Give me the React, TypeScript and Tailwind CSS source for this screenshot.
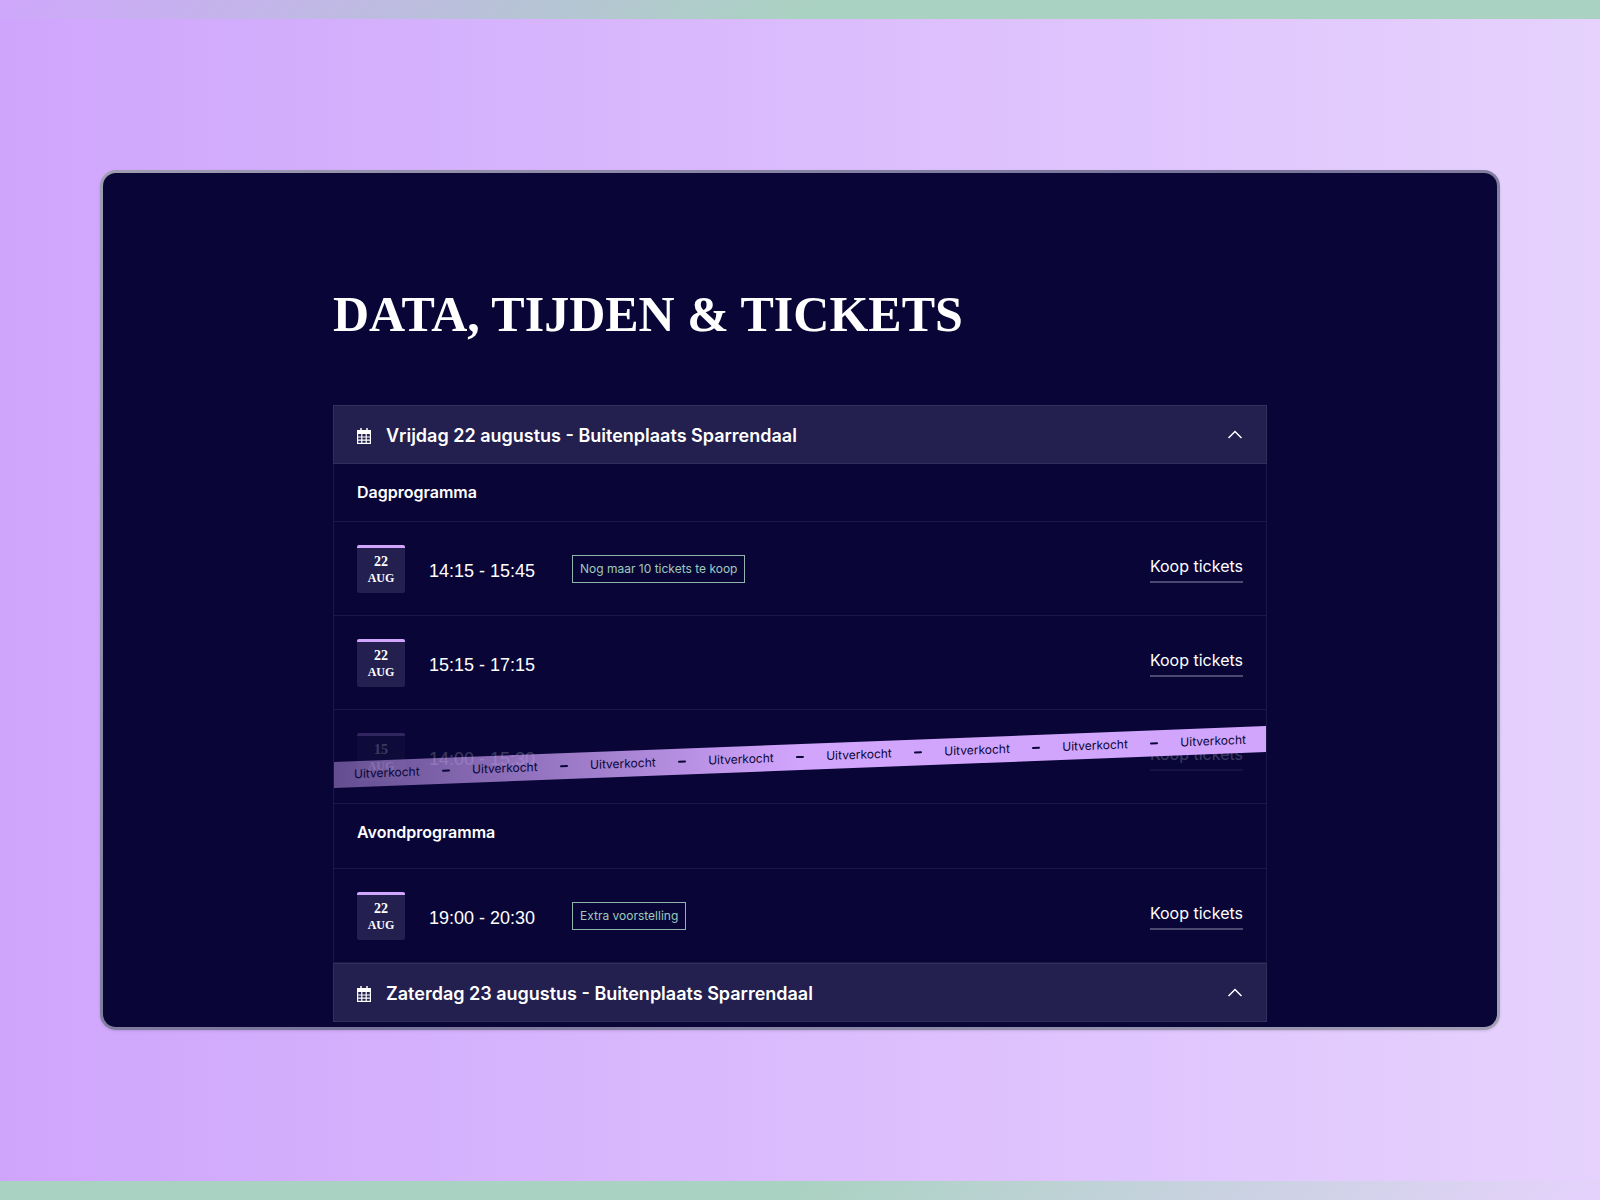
import { useState } from "react"

type Show = {
  day: string
  month: string
  time: string
  label?: string
  soldOut?: boolean
}

const dayShows: Show[] = [
  { day: "22", month: "AUG", time: "14:15 - 15:45", label: "Nog maar 10 tickets te koop" },
  { day: "22", month: "AUG", time: "15:15 - 17:15" },
  { day: "15", month: "AUG", time: "14:00 - 15:30", soldOut: true },
]

const eveningShows: Show[] = [
  { day: "22", month: "AUG", time: "19:00 - 20:30", label: "Extra voorstelling" },
]

function CalendarIcon() {
  return (
    <svg width="14" height="16" viewBox="0 0 14 16" fill="none" aria-hidden="true">
      <path d="M0 2h14v4H0z" fill="white" />
      <path d="M4 0v3M10 0v3" stroke="white" strokeWidth="1.5" />
      <path d="M.6 5.5v9.9h12.8V5.5M0 9h14M0 12.2h14M4.8 6v9.5M9.2 6v9.5" stroke="white" strokeWidth="1.2" />
    </svg>
  )
}

function DayHeader({ title, open, onToggle }: { title: string; open: boolean; onToggle: () => void }) {
  return (
    <button
      type="button"
      aria-expanded={open}
      onClick={onToggle}
      className="flex w-full items-center justify-between border border-[#312f5b] bg-[#231f4e] px-[23px] pt-4 pb-[13px] text-left text-white"
    >
      <span className="flex items-center gap-[15px]">
        <CalendarIcon />
        <span className="text-lg leading-7 font-semibold">{title}</span>
      </span>
      <svg width="16" height="12" viewBox="0 0 16 12" fill="none" aria-hidden="true">
        <path d="M1.5 8 8 1.5 14.500 8" stroke="white" strokeWidth="1.5" />
      </svg>
    </button>
  )
}

function SoldOutRibbon() {
  return (
    <div className="pointer-events-none absolute inset-x-0 top-[34px] flex h-[26px] -skew-y-[2.200deg] items-center justify-between bg-linear-to-r from-[#d2a5fd]/45 to-[#d2a5fd] to-50% px-5 text-xs text-[#090637]">
      {Array.from({ length: 15 }, (_, i) =>
        i % 2 === 0 ? <span key={i}>Uitverkocht</span> : <span key={i} className="h-[2px] w-2 rounded-full bg-[#090637]" />
      )}
    </div>
  )
}

function ShowRow({ show }: { show: Show }) {
  return (
    <li className="relative overflow-hidden border-b border-[#1b1846] px-[23px]">
      <div className={`flex h-[93px] items-center ${show.soldOut ? "opacity-20" : ""}`}>
        <div className="flex h-12 w-12 flex-col items-center rounded-xs border-t-3 border-[#d2a5fd] bg-[#231f4e] pt-1.5 font-['Liberation_Serif',serif] text-sm leading-4 font-bold">
          <span>{show.day}</span>
          <span className="text-xs leading-4">{show.month}</span>
        </div>
        <span className="ml-6 w-[143px] pt-1 font-['Liberation_Sans',sans-serif] text-lg">{show.time}</span>
        {show.label && (
          <span className="border border-[#8fb5ae] px-[7px] py-1 text-xs leading-[18px] text-[#9fcabb]">{show.label}</span>
        )}
        <a href="#tickets" className="ml-auto border-b-2 border-[#4b4970] pb-[3px] text-base leading-6">
          Koop tickets
        </a>
      </div>
      {show.soldOut && <SoldOutRibbon />}
    </li>
  )
}

export default function App() {
  const [openDays, setOpenDays] = useState([true, true])
  const toggle = (index: number) => setOpenDays(openDays.map((open, i) => (i === index ? !open : open)))

  return (
    <div className="flex min-h-screen flex-col bg-[linear-gradient(135deg,#cfa7fc_0%,#aad2c2_29%,#aad2c2_71%,#e6d2fd_100%)] py-[19px] font-[Inter,sans-serif]">
      <main className="flex flex-1 flex-col justify-center bg-linear-to-r from-[#cfa5fc] to-[#e6d2fd] px-25">
        <div className="rounded-2xl bg-linear-135 from-[#9f9db0] via-[#77749a] to-[#a19fb3] p-[3px] shadow-sm">
          <div className="rounded-[13px] bg-[#090637] pt-[106px] pb-[5px] text-white">
            <div className="mx-auto max-w-[934px]">
              <h1 className="font-['Liberation_Serif',serif] text-[50px] leading-[70px] font-bold">
                DATA, TIJDEN &amp; TICKETS
              </h1>

              <section className="mt-14">
                <DayHeader
                  title="Vrijdag 22 augustus - Buitenplaats Sparrendaal"
                  open={openDays[0]}
                  onToggle={() => toggle(0)}
                />
                {openDays[0] && (
                  <div className="border-x border-[#1b1846]">
                    <h2 className="border-b border-[#1b1846] px-[23px] pt-4 pb-[17px] text-base leading-6 font-semibold">
                      Dagprogramma
                    </h2>
                    <ul>
                      {dayShows.map((show) => (
                        <ShowRow key={show.time} show={show} />
                      ))}
                    </ul>
                    <h2 className="border-b border-[#1b1846] px-[23px] pt-4 pb-6 text-base leading-6 font-semibold">
                      Avondprogramma
                    </h2>
                    <ul>
                      {eveningShows.map((show) => (
                        <ShowRow key={show.time} show={show} />
                      ))}
                    </ul>
                  </div>
                )}
                <DayHeader
                  title="Zaterdag 23 augustus - Buitenplaats Sparrendaal"
                  open={openDays[1]}
                  onToggle={() => toggle(1)}
                />
              </section>
            </div>
          </div>
        </div>
      </main>
    </div>
  )
}
